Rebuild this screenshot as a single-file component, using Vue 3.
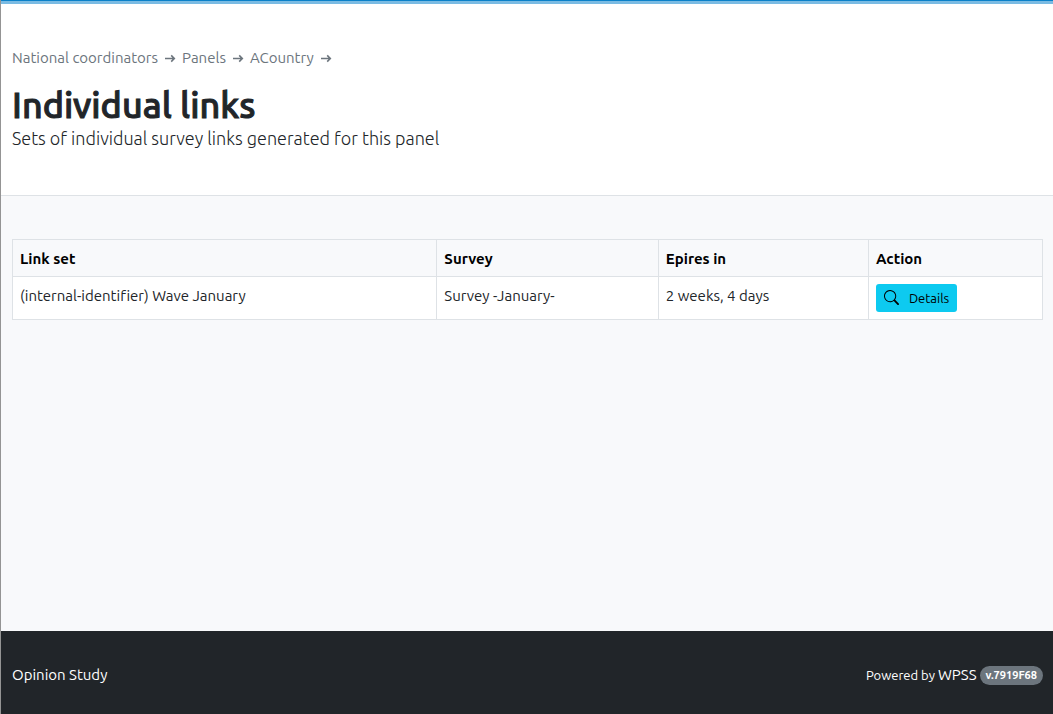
<script setup>
const crumbs = ['National coordinators', 'Panels', 'ACountry']
const columns = ['Link set', 'Survey', 'Epires in', 'Action']
const rows = [
  { name: '(internal-identifier) Wave January', survey: 'Survey -January-', expires: '2 weeks, 4 days' }
]
</script>

<template>
  <div class="page">
    <header class="header">
      <nav class="crumbs" aria-label="Breadcrumb">
        <span v-for="crumb in crumbs" :key="crumb" class="crumb">
          <a href="#">{{ crumb }}</a>
          <svg class="arrow" viewBox="0 0 12 12" aria-hidden="true">
            <path d="M1 6.5H10.5M7.2 3.4L10.3 6.5L7.2 9.6" />
          </svg>
        </span>
      </nav>
      <h1>Individual links</h1>
      <p class="lead">Sets of individual survey links generated for this panel</p>
    </header>

    <main class="content">
      <table>
        <colgroup>
          <col class="col-name" />
          <col class="col-survey" />
          <col class="col-expires" />
          <col />
        </colgroup>
        <thead>
          <tr>
            <th v-for="column in columns" :key="column" scope="col">{{ column }}</th>
          </tr>
        </thead>
        <tbody>
          <tr v-for="row in rows" :key="row.name">
            <td>{{ row.name }}</td>
            <td>{{ row.survey }}</td>
            <td>{{ row.expires }}</td>
            <td class="action">
              <a class="button" href="#">
                <svg class="search" viewBox="0 0 16 16" aria-hidden="true">
                  <path d="M11.742 10.344a6.5 6.5 0 1 0-1.397 1.398h-.001c.03.04.062.078.098.115l3.85 3.85a1 1 0 0 0 1.415-1.414l-3.85-3.85a1.007 1.007 0 0 0-.115-.1zM12 6.5a5.5 5.5 0 1 1-11 0 5.5 5.5 0 0 1 11 0z" />
                </svg>
                <span>Details</span>
              </a>
            </td>
          </tr>
        </tbody>
      </table>
    </main>

    <footer class="footer">
      <span>Opinion Study</span>
      <div class="powered">
        <span class="small">Powered by</span>
        <a href="#">WPSS</a>
        <span class="badge">v.7919F68</span>
      </div>
    </footer>
  </div>
</template>

<style>
body {
  margin: 0;
}
</style>

<style scoped>
.page {
  box-sizing: border-box;
  display: flex;
  flex-direction: column;
  min-height: 100vh;
  border-left: 1px solid #949494;
  background: #f8f9fb;
  color: #212529;
  font: 15px/22px Ubuntu, "Noto Sans", sans-serif;
  font-variant-ligatures: none;
}

.page::before {
  content: "";
  height: 1px;
  background: #0a80c8;
}

.header {
  padding: 43px 11px 45px;
  border-top: 3px solid #7abbe3;
  border-bottom: 1px solid #dee2e6;
  background: #fff;
}

.crumbs {
  display: flex;
  gap: 6px;
}

.crumb {
  display: flex;
  align-items: center;
  gap: 6px;
  color: #6c757d;
}

a {
  color: inherit;
  text-decoration: none;
}

.arrow {
  width: 12px;
  height: 12px;
  fill: none;
  stroke: #6c757d;
  stroke-width: 1.6;
}

h1 {
  margin: 14px 0 0;
  font-size: 36px;
  line-height: 43px;
  font-weight: 500;
  -webkit-text-stroke: 1px currentColor;
}

.lead {
  margin: 0;
  font-size: 18px;
  line-height: 24px;
  font-weight: 300;
}

.content {
  flex: 1;
  padding: 43px 10px 43px 11px;
}

table {
  width: 100%;
  table-layout: fixed;
  border-collapse: collapse;
}

.col-name {
  width: 41.2%;
}

.col-survey {
  width: 21.5%;
}

.col-expires {
  width: 20.4%;
}

th,
td {
  padding: 8px 7px 6px;
  border: 1px solid #dee2e6;
  text-align: left;
  vertical-align: top;
}

th {
  color: #000;
  font-weight: 700;
}

td {
  background: #fff;
}

.action {
  padding: 7px;
}

.button {
  display: flex;
  align-items: center;
  gap: 10px;
  width: fit-content;
  box-sizing: border-box;
  height: 28px;
  padding: 0 8px;
  border-radius: 3px;
  background: #0dcaf0;
  color: #000;
  font-size: 13px;
}

.search {
  width: 15px;
  height: 15px;
  margin-bottom: 2px;
  fill: #000;
}

.footer {
  display: flex;
  align-items: center;
  justify-content: space-between;
  box-sizing: border-box;
  min-height: 83px;
  padding: 5px 10px 0 11px;
  background: #212529;
  color: #fff;
}

.powered {
  display: flex;
  align-items: center;
  gap: 3px;
}

.small {
  font-size: 13px;
}

.badge {
  padding: 0 6px;
  border-radius: 10px;
  background: #6c757d;
  font-size: 11px;
  line-height: 19px;
  font-weight: 700;
}
</style>
